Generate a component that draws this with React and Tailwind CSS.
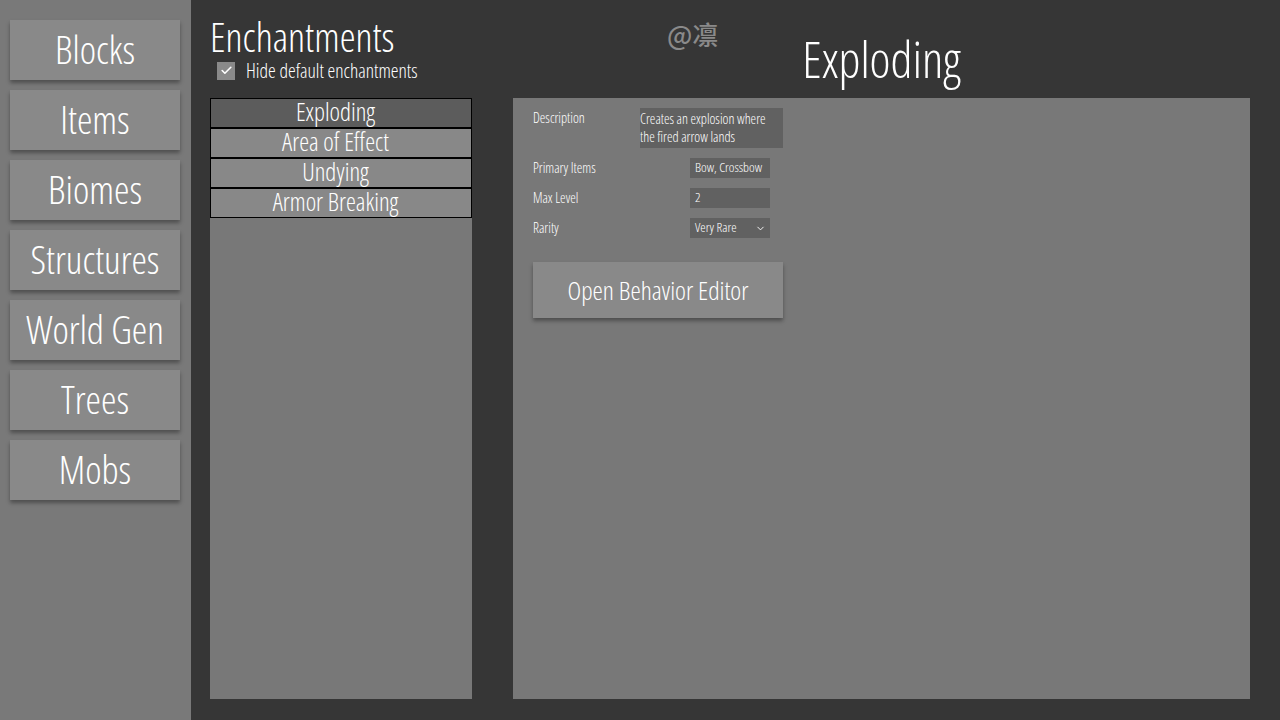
import React, { useState } from 'react';
import { ChevronDown, Check } from 'lucide-react';

const font = { fontFamily: '"Open Sans", "Roboto Condensed", sans-serif' };

const navItems = ['Blocks', 'Items', 'Biomes', 'Structures', 'World Gen', 'Trees', 'Mobs'];
const enchantments = ['Exploding', 'Area of Effect', 'Undying', 'Armor Breaking'];

const App = () => {
    const [selected, setSelected] = useState('Exploding');
    const [hideDefault, setHideDefault] = useState(true);

    return (
        <div className="relative flex w-[1280px] h-[720px] bg-[#363636] text-white overflow-hidden font-light font-stretch-condensed" style={font}>
            {/* Sidebar */}
            <div className="w-[191px] h-full bg-[#797979] flex flex-col gap-[10px] pt-[20px] pl-[10px]">
                {navItems.map((item) => (
                    <button
                        key={item}
                        className="w-[170px] h-[60px] bg-[#898989] text-[39px] leading-none text-white pb-[3px] shadow-[0_3px_4px_rgba(0,0,0,0.35)] flex items-center justify-center"
                    >
                        {item}
                    </button>
                ))}
            </div>

            {/* Watermark */}
            <div
                className="absolute left-[667px] top-[14px] text-[26px] font-medium font-stretch-normal text-[#8a8a8a]"
                style={{ fontFamily: '"Noto Sans CJK SC", "Noto Sans", sans-serif' }}
            >
                @凛
            </div>

            {/* Enchantment list column */}
            <div className="ml-[19px] w-[262px] flex flex-col pb-[21px]">
                <div className="h-[98px] flex flex-col">
                    <h1 className="text-[40px] leading-none mt-[17px]">Enchantments</h1>
                    <label className="flex items-center gap-[11px] ml-[7px] mt-[4px] cursor-pointer">
                        <span
                            onClick={() => setHideDefault(!hideDefault)}
                            className="w-[18px] h-[18px] bg-[#8a8a8a] flex items-center justify-center"
                        >
                            {hideDefault && <Check size={13} strokeWidth={3} color="white" />}
                        </span>
                        <span className="text-[19.5px] leading-none">Hide default enchantments</span>
                    </label>
                </div>
                <div className="flex-1 bg-[#787878] flex flex-col">
                    {enchantments.map((name) => (
                        <div
                            key={name}
                            onClick={() => setSelected(name)}
                            className={`h-[30px] border border-black flex items-center justify-center text-[25px] leading-none pb-[3px] pr-[11px] cursor-pointer ${
                                selected === name ? 'bg-[#5c5c5c]' : 'bg-[#888888]'
                            }`}
                        >
                            {name}
                        </div>
                    ))}
                </div>
            </div>

            {/* Details column */}
            <div className="ml-[41px] w-[737px] flex flex-col pb-[21px]">
                <div className="h-[98px] flex items-end justify-center pb-[14px]">
                    <h2 className="text-[50px] leading-none">{selected}</h2>
                </div>
                <div className="flex-1 bg-[#787878] pl-[20px] pt-[10px] flex flex-col">
                    <div className="flex items-start">
                        <span className="w-[107px] text-[14px] leading-none mt-[3px]">Description</span>
                        <div className="w-[143px] h-[40px] bg-[#616161] text-[14px] leading-[18px] pt-[2px] pr-[8px]">
                            Creates an explosion where the fired arrow lands
                        </div>
                    </div>
                    <div className="flex items-center mt-[10px] h-[20px]">
                        <span className="w-[157px] text-[14px] leading-none">Primary Items</span>
                        <div className="w-[80px] h-[20px] bg-[#616161] text-[13.5px] leading-none px-[5px] flex items-center whitespace-nowrap">Bow, Crossbow</div>
                    </div>
                    <div className="flex items-center mt-[10px] h-[20px]">
                        <span className="w-[157px] text-[14px] leading-none">Max Level</span>
                        <div className="w-[80px] h-[20px] bg-[#616161] text-[13.5px] leading-none px-[5px] flex items-center">2</div>
                    </div>
                    <div className="flex items-center mt-[10px] h-[20px]">
                        <span className="w-[157px] text-[14px] leading-none">Rarity</span>
                        <div className="w-[80px] h-[20px] bg-[#616161] text-[13.5px] leading-none pl-[5px] pr-[4px] flex items-center justify-between">
                            <span>Very Rare</span>
                            <ChevronDown size={11} strokeWidth={2} color="white" />
                        </div>
                    </div>
                    <button className="mt-[24px] w-[250px] h-[56px] bg-[#898989] text-[26px] leading-none text-white shadow-[0_3px_4px_rgba(0,0,0,0.35)] flex items-center justify-center">
                        Open Behavior Editor
                    </button>
                </div>
            </div>
        </div>
    );
};

export default App;
